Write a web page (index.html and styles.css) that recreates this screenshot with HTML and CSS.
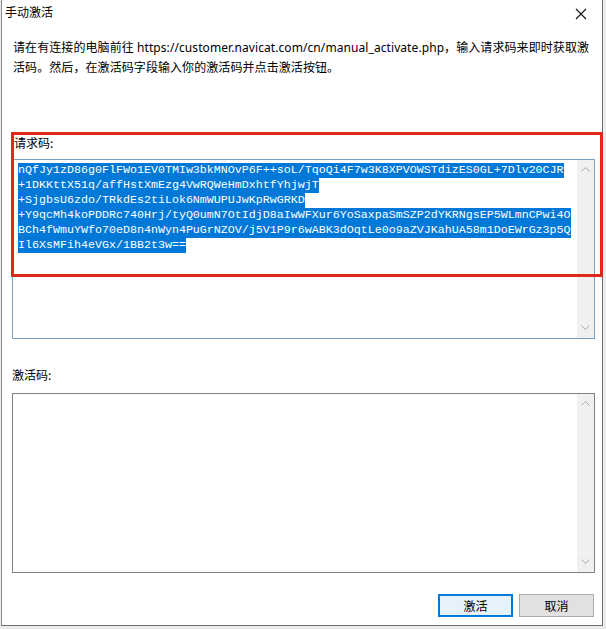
FILE: index.html
```html
<!DOCTYPE html>
<html lang="zh-CN">
<head>
<meta charset="utf-8">
<title>手动激活</title>
<link rel="stylesheet" href="styles.css">
</head>
<body>
<div class="window">
  <div class="titlebar">
    <span class="title">手动激活</span>
    <span class="close">
      <svg width="12" height="12" viewBox="0 0 12 12"><path d="M1 1 L11 11 M11 1 L1 11" stroke="#111" stroke-width="1.1" fill="none"/></svg>
    </span>
  </div>
  <div class="content">
    <p class="intro"><span class="ln">请在有连接的电脑前往 https://customer.navicat.com/cn/manual_activate.php，输入请求码来即时获取激</span><span class="ln">活码。然后，在激活码字段输入你的激活码并点击激活按钮。</span></p>
    <div class="label first">请求码:</div>
    <div class="box focused">
      <div class="code">
        <div class="line"><span class="sel">nQfJy1zD86g0FlFWo1EV0TMIw3bkMNOvP6F++soL/TqoQi4F7w3K8XPVOWSTdizES0GL+7Dlv20CJR</span></div>
        <div class="line"><span class="sel">+1DKKttX51q/affHstXmEzg4VwRQWeHmDxhtfYhjwjT</span></div>
        <div class="line"><span class="sel">+SjgbsU6zdo/TRkdEs2tiLok6NmWUPUJwKpRwGRKD</span></div>
        <div class="line"><span class="sel">+Y9qcMh4koPDDRc740Hrj/tyQ0umN7OtIdjD8aIwWFXur6YoSaxpaSmSZP2dYKRNgsEP5WLmnCPwi4O</span></div>
        <div class="line"><span class="sel">BCh4fWmuYWfo70eD8n4nWyn4PuGrNZOV/j5V1P9r6wABK3dOqtLe0o9aZVJKahUA58m1DoEWrGz3p5Q</span></div>
        <div class="line"><span class="sel">Il6XsMFih4eVGx/1BB2t3w==</span></div>
      </div>
      <div class="scrollbar">
        <svg class="arrow" width="9" height="6" viewBox="0 0 9 6"><path d="M0.5 5.5 L4.5 1.5 L8.5 5.5" stroke="#a8a8a8" fill="none"/></svg>
        <svg class="arrow" width="9" height="6" viewBox="0 0 9 6"><path d="M0.5 0.5 L4.5 4.5 L8.5 0.5" stroke="#a8a8a8" fill="none"/></svg>
      </div>
    </div>
    <div class="label second">激活码:</div>
    <div class="box plain">
      <div class="code"></div>
      <div class="scrollbar">
        <svg class="arrow" width="9" height="6" viewBox="0 0 9 6"><path d="M0.5 5.5 L4.5 1.5 L8.5 5.5" stroke="#a8a8a8" fill="none"/></svg>
        <svg class="arrow" width="9" height="6" viewBox="0 0 9 6"><path d="M0.5 0.5 L4.5 4.5 L8.5 0.5" stroke="#a8a8a8" fill="none"/></svg>
      </div>
    </div>
    <div class="buttons">
      <button class="btn default">激活</button>
      <button class="btn">取消</button>
    </div>
  </div>
  <div class="highlight"></div>
</div>
</body>
</html>
```
FILE: styles.css
```css
html, body {
  margin: 0;
  padding: 0;
}
body {
  background: #ececec;
  width: 606px;
  height: 629px;
  overflow: hidden;
  font-family: "Noto Sans", "Noto Sans CJK SC", sans-serif;
  font-size: 12px;
  color: #000;
}
.window {
  position: relative;
  margin-left: 1px;
  width: 600px;
  height: 625px;
  background: #fff;
  border-left: 1px solid #8a8a8a;
  border-right: 1px solid #6e6e6e;
  border-bottom: 1px solid #6e6e6e;
  display: flex;
  flex-direction: column;
}
.titlebar {
  height: 30px;
  display: flex;
  align-items: flex-start;
  justify-content: space-between;
}
.title {
  font-family: "Noto Sans CJK SC", sans-serif;
  margin: 2px 0 0 3px;
  line-height: 20px;
}
.close {
  margin: 8px 15px 0 0;
  display: flex;
}
.content {
  padding: 0 8px 0 10px;
  display: flex;
  flex-direction: column;
}
.intro {
  margin: 8px 0 0 1px;
  line-height: 20px;
}
.ln {
  display: block;
  white-space: nowrap;
  font-family: "Noto Sans", "Noto Sans CJK SC", sans-serif;
  letter-spacing: 0.08px;
}
.label {
  font-family: "Noto Sans CJK SC", sans-serif;
  line-height: 20px;
  height: 20px;
}
.label.first {
  margin: 55px 0 0 2px;
}
.label.second {
  margin: 26px 0 0 0;
}
.box {
  height: 178px;
  width: 581px;
  display: flex;
  background: #fff;
}
.box.focused {
  margin-top: 6px;
  border: 1px solid #7d9fbf;
}
.box.plain {
  margin-top: 8px;
  border: 1px solid #7f7f7f;
}
.code {
  flex: 1;
  padding: 3px 0 0 5px;
  font-family: "Liberation Mono", monospace;
  font-size: 11.67px;
}
.line {
  height: 15px;
  line-height: 15px;
  white-space: nowrap;
}
.sel {
  display: inline-block;
  background: #0078d7;
  color: #fff;
  height: 15px;
}
.scrollbar {
  width: 17px;
  background: #f0f0f0;
  display: flex;
  flex-direction: column;
  justify-content: space-between;
  align-items: center;
  padding: 6px 0 7px;
}
.arrow {
  display: block;
}
.buttons {
  display: flex;
  justify-content: flex-end;
  gap: 6px;
  margin: 21px 0 0 0;
  padding-right: 0;
}
.btn {
  width: 75px;
  height: 23px;
  font-family: "Noto Sans CJK SC", sans-serif;
  font-size: 12px;
  color: #000;
  background: #e1e1e1;
  border: 1px solid #adadad;
  padding: 0;
  margin: 0;
}
.btn.default {
  border: 2px solid #0078d7;
  background: #e5f1fb;
}
.highlight {
  position: absolute;
  left: 9px;
  top: 132px;
  width: 586px;
  height: 139px;
  border: 3px solid #e0281c;
  pointer-events: none;
}
```
